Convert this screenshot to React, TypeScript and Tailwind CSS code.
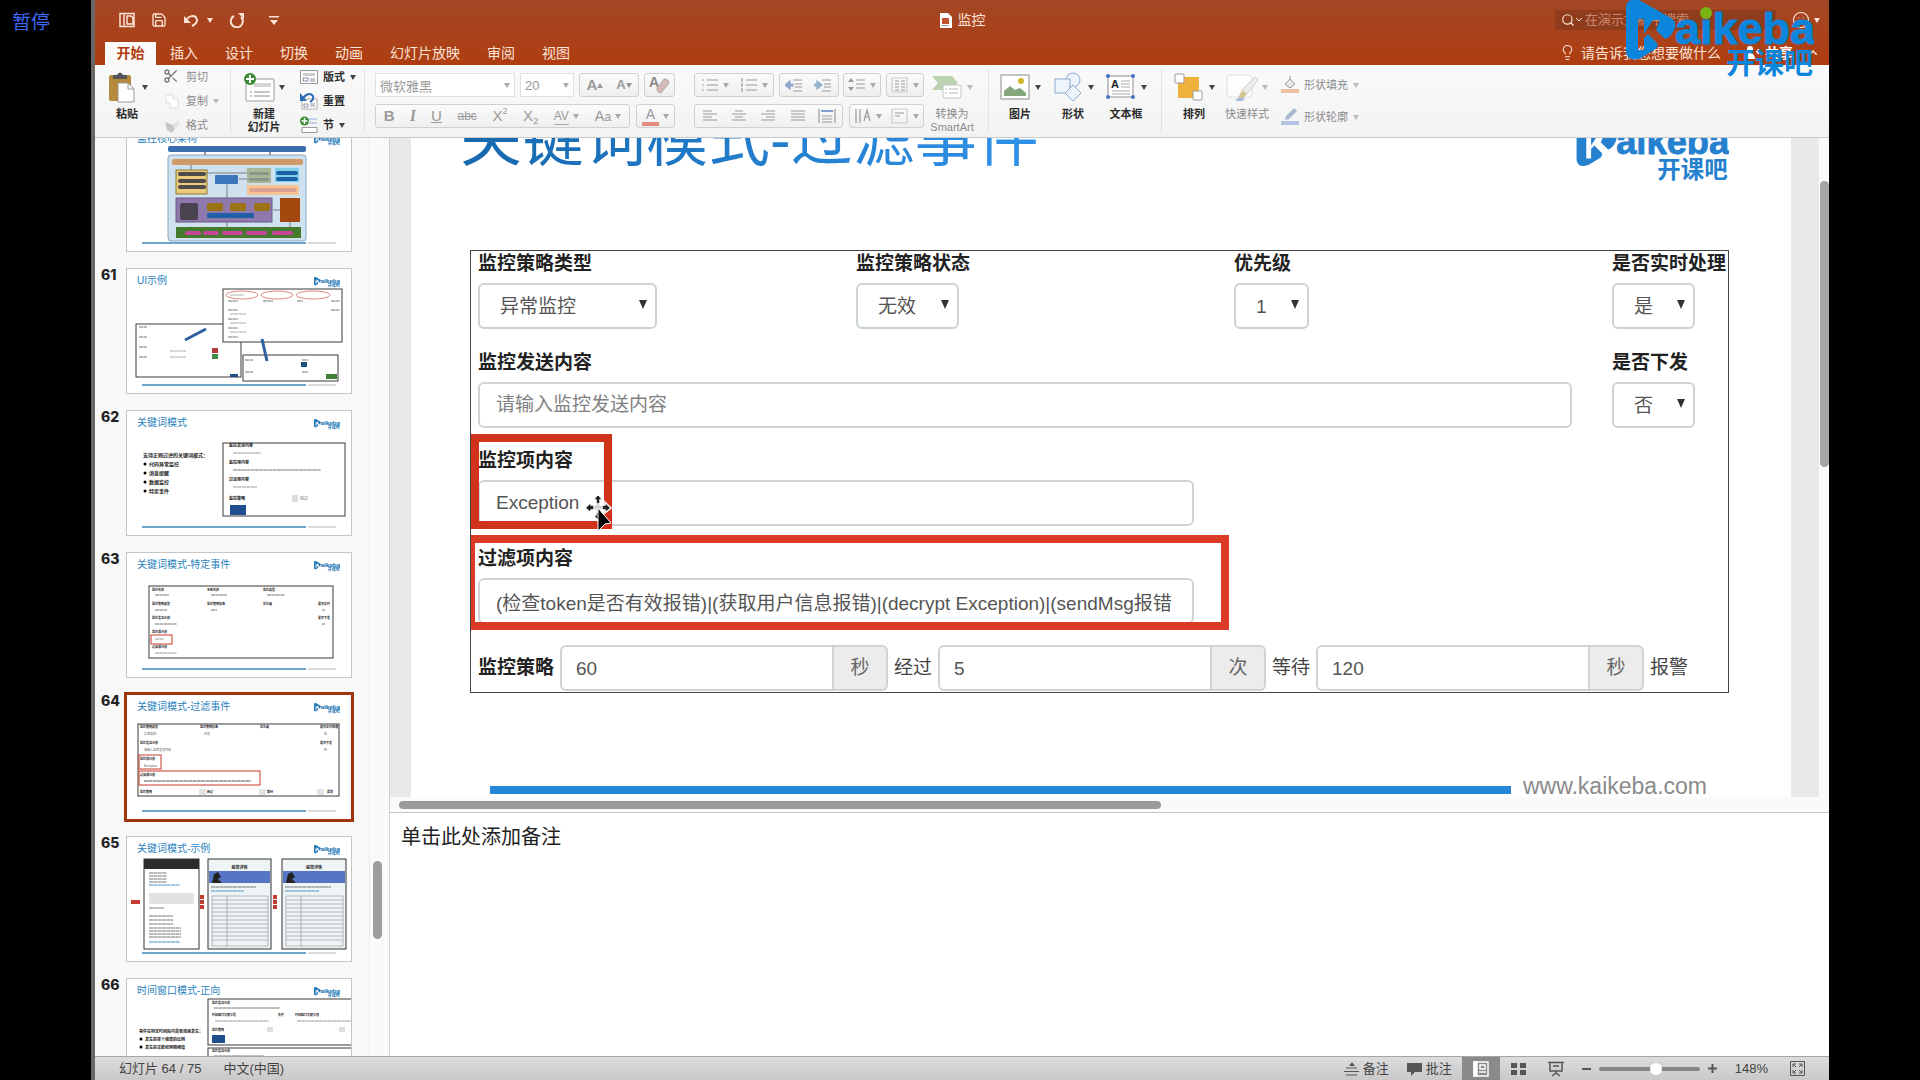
import type { ReactNode } from 'react';
import clsx from 'clsx';
import { Lightbulb, RotateCcw, Save, Scissors, Search, Smile } from 'lucide-react';

const tabs = ['插入', '设计', '切换', '动画', '幻灯片放映', '审阅', '视图'];

function Caret({ className = 'text-[#555]' }: { className?: string }) {
  return (
    <svg viewBox="0 0 6 5" className={clsx('h-[5px] w-[6px] shrink-0', className)} fill="currentColor">
      <path d="M0 0h6L3 5z" />
    </svg>
  );
}

function Logo({ color, dot, ...rest }: { color: string; dot?: string; [key: string]: any }) {
  return (
    <svg viewBox="0 0 188 78" {...rest}>
      <path
        fill={color}
        d="M0 8Q0-1 9 0h4l32 18q7 5 3 12-3 7-9 9l-9-9 4-10h-7l-9 14V19h-6v31h6V38l4-4 9 9q2 4-3 7L15 58Q2 63 0 52z"
      />
      <text
        x="49"
        y="44"
        fontFamily="'Liberation Sans', sans-serif"
        fontWeight="700"
        fontSize="45"
        fill={color}
        stroke={color}
        strokeWidth="1"
      >
        aikeba
      </text>
      {dot && <circle cx="80" cy="13" r="6" fill={dot} />}
      <text
        x="100"
        y="74"
        fontFamily="'Noto Sans CJK SC', sans-serif"
        fontWeight="700"
        fontSize="29"
        fill={color}
      >
        开课吧
      </text>
    </svg>
  );
}

/* ---------- title bar ---------- */

function TitleBar() {
  return (
    <header className="bg-gradient-to-b from-[#a34724] to-[#af3d10] text-[#fbe3d6]">
      <div className="grid h-10 grid-cols-3 items-center">
        <div className="flex items-center pl-6">
          <button aria-label="文件" className="mr-4">
            <svg viewBox="0 0 16 16" className="h-4 w-4" fill="none" stroke="currentColor" strokeWidth="1.5">
              <path d="M1 1.500h14v13H1zM5 2v12M8 4h4l2 2v6H8z" />
            </svg>
          </button>
          <button aria-label="保存" className="mr-4">
            <Save size={16} />
          </button>
          <button aria-label="撤销" className="mr-6 flex items-center gap-2">
            <svg viewBox="0 0 16 14" className="h-[14px] w-4" fill="none" stroke="currentColor" strokeWidth="2">
              <path d="M2 9C5 2 13 1 14 7c0 3-3 5-5 6" />
              <path d="M1 3v7h7z" fill="currentColor" stroke="none" />
            </svg>
            <Caret className="text-[#fbe3d6]" />
          </button>
          <button aria-label="重复" className="mr-4 -ml-2">
            <svg viewBox="0 0 16 16" className="h-4 w-4" fill="none" stroke="currentColor" strokeWidth="2">
              <path d="M5 4a6 6 0 1 0 7 1" />
              <path d="M9 1h6v6z" fill="currentColor" stroke="none" />
            </svg>
          </button>
          <button aria-label="自定义工具栏" className="ml-2">
            <svg viewBox="0 0 10 9" className="h-[9px] w-[10px]" fill="currentColor">
              <path d="M0 0h10v1.500H0zM1 4h8L5 9z" />
            </svg>
          </button>
        </div>
        <h1 className="flex items-center justify-center gap-[6px] text-sm">
          <svg viewBox="0 0 13 15" className="h-[15px] w-[13px]">
            <path d="M1 0h8l4 4v11H1z" fill="#fff" />
            <path d="M3 5h7v6H3z" fill="#c0532c" />
            <path d="M3 12h7v1H3z" fill="#999" />
          </svg>
          监控
        </h1>
        <div className="flex items-center justify-end gap-6 pr-[9px]">
          <label className="flex h-5 w-[221px] items-center bg-[#8f3c1c] pl-[6px]">
            <Search size={14} />
            <span className="sr-only">搜索</span>
            <svg viewBox="0 0 6 4" className="ml-px h-1 w-[6px]" fill="none" stroke="currentColor">
              <path d="M0 0l3 3 3-3" />
            </svg>
            <input
              className="ml-[3px] h-5 w-44 bg-transparent text-[13px] leading-5 outline-none placeholder:text-[#c88a70]"
              placeholder="在演示文稿中搜索"
            />
          </label>
          <button aria-label="反馈" className="-ml-2 flex items-center gap-1">
            <Smile size={18} strokeWidth={1.5} />
            <Caret className="text-[#fbe3d6]" />
          </button>
        </div>
      </div>
      <nav className="flex h-[25px] items-end pl-[10px] text-sm">
        <button className="h-[23px] w-[51px] bg-[#fbfaf9] pb-[2px] font-bold text-[#b23a10]">开始</button>
        <div className="flex flex-1 gap-[27px] pl-[14px]">
          {tabs.map(t => (
            <button key={t} className="h-[23px] pb-[2px]">
              {t}
            </button>
          ))}
        </div>
        <div className="flex h-[23px] items-center pr-3 pb-[2px]">
          <Lightbulb size={17} strokeWidth={1.5} />
          <button className="ml-[5px]">请告诉我您想要做什么</button>
          <button className="ml-6 flex items-center gap-1 font-bold text-white">
            <svg viewBox="0 0 16 13" className="h-[13px] w-4" fill="currentColor">
              <circle cx="5" cy="3" r="3" />
              <path d="M0 13c0-8 10-8 10 0zM11 5h5v1.500h-5zM12.500 3H14v5h-1.500z" />
            </svg>
            共享
          </button>
          <svg viewBox="0 0 8 5" className="ml-4 h-[5px] w-2" fill="none" stroke="currentColor" strokeWidth="1.5">
            <path d="M0 5l4-4 4 4" />
          </svg>
        </div>
      </nav>
    </header>
  );
}

/* ---------- ribbon ---------- */

function BigButton({
  icon,
  label,
  sub,
  muted,
}: {
  icon: ReactNode;
  label: string;
  sub?: string;
  muted?: boolean;
}) {
  return (
    <button
      className={clsx(
        'flex w-11 flex-col items-center text-[11px] leading-[13px] whitespace-nowrap',
        muted ? 'text-[#8b8b8b]' : 'font-bold text-[#2a2a2a]',
      )}
    >
      <span className="mt-[6px] mb-[5px] flex h-8 items-center gap-1">
        <svg viewBox="0 0 32 32" className="h-8 w-8">
          {icon}
        </svg>
        <Caret className={muted ? 'text-[#bbb]' : 'text-[#444]'} />
      </span>
      <span>{label}</span>
      {sub && <span>{sub}</span>}
    </button>
  );
}

function SmallButton({
  icon,
  label,
  caret,
  muted,
}: {
  icon: ReactNode;
  label: string;
  caret?: boolean;
  muted?: boolean;
}) {
  return (
    <button
      className={clsx(
        'flex h-6 items-center gap-[5px] text-[11px] whitespace-nowrap',
        muted ? 'text-[#8b8b8b]' : 'font-bold text-[#2a2a2a]',
      )}
    >
      <svg viewBox="0 0 18 18" className="h-[18px] w-[18px]">
        {icon}
      </svg>
      {label}
      {caret && <Caret className={muted ? 'text-[#bbb]' : 'text-[#444]'} />}
    </button>
  );
}

function Tools({ className, children }: { className?: string; children: ReactNode }) {
  return (
    <div
      className={clsx(
        'flex h-6 items-center justify-around rounded-[3px] border border-[#d0d0d0] bg-gradient-to-b from-[#fbfbfb] to-[#efefef] text-[#999]',
        className,
      )}
    >
      {children}
    </div>
  );
}

function Tool({ name, caret, children }: { name: string; caret?: boolean; children: ReactNode }) {
  return (
    <button aria-label={name} className="flex h-full items-center gap-1 text-[15px] leading-5">
      {children}
      {caret && <Caret className="text-[#aaa]" />}
    </button>
  );
}

function Glyph({ d, children }: { d: string; children?: ReactNode }) {
  return (
    <svg viewBox="0 0 18 18" className="h-[18px] w-[18px]" fill="none" stroke="#999" strokeWidth="1.2">
      <path d={d} />
      {children}
    </svg>
  );
}

function Divider() {
  return <div className="my-1 w-px bg-[#e2e2e2]" />;
}

function Ribbon() {
  return (
    <div className="flex h-[73px] border-b border-[#c9c9c9] bg-gradient-to-b from-[#fafafa] to-[#f3f3f3]">
      <div className="flex w-[135px] gap-[14px] pl-[10px]">
        <BigButton
          label="粘贴"
          icon={
            <>
              <rect x="3" y="4" width="22" height="26" rx="2" fill="#b58a3c" />
              <path d="M7 8V4h4q3-5 6 0h4v4z" fill="#555" />
              <path d="M12 12h10l6 6v13H12z" fill="#fff" stroke="#999" />
              <path d="M22 12v6h6" fill="none" stroke="#999" />
            </>
          }
        />
        <div className="flex flex-col">
          <SmallButton muted label="剪切" icon={<Scissors size={16} color="#777" />} />
          <SmallButton muted caret label="复制" icon={<path d="M3 3h7v4h5v9H7v-5H3z" fill="#fff" stroke="#ddd" />} />
          <SmallButton
            muted
            label="格式"
            icon={
              <>
                <path d="M2 6l8 3 2 4-3 4-5-3z" fill="#c6c6c6" />
                <path d="M10 9l5-5 2 3-4 5z" fill="#e2e2e2" />
              </>
            }
          />
        </div>
      </div>
      <Divider />
      <div className="flex w-[133px] gap-[14px] pl-[11px]">
        <BigButton
          label="新建"
          sub="幻灯片"
          icon={
            <>
              <rect x="3" y="8" width="28" height="22" rx="1" fill="#fff" stroke="#9a9a9a" />
              <path d="M11 12h17v4H11z" fill="#d5d5d5" />
              <path d="M11 21h16M11 25h16" stroke="#888" />
              <path d="M7 21h2M7 25h2" stroke="#888" />
              <circle cx="7" cy="8" r="6" fill="#3d8b34" />
              <path d="M7 4v8M3 8h8" stroke="#fff" strokeWidth="2" />
            </>
          }
        />
        <div className="flex flex-col">
          <SmallButton
            caret
            label="版式"
            icon={
              <>
                <rect x="0.500" y="2.500" width="17" height="13" fill="#fff" stroke="#999" />
                <path d="M3 5h12v3H3z" fill="#ccc" />
                <path d="M3 10h5v3H3zM10 11h5M10 13h5" fill="none" stroke="#7f8aa5" />
              </>
            }
          />
          <SmallButton
            label="重置"
            icon={
              <>
                <path d="M2 7h15v10H2z" fill="#fff" stroke="#aaa" />
                <path d="M4 12h4v3H4zM10 12h5M10 14h5" fill="none" stroke="#8a94aa" />
                <path d="M3 6Q9-1 13 4q1 4-3 6" fill="none" stroke="#2a6cb5" strokeWidth="2" />
                <path d="M0 1v8h7z" fill="#2a6cb5" />
              </>
            }
          />
          <SmallButton
            caret
            label="节"
            icon={
              <>
                <path d="M9 3h8M9 7h8" stroke="#8bb0da" />
                <path d="M2 11.500h15v5H2z" fill="#fff" stroke="#999" />
                <circle cx="4.500" cy="5" r="4.500" fill="#3d8b34" />
                <path d="M4.500 2v6M1.500 5h6" stroke="#fff" strokeWidth="1.5" />
              </>
            }
          />
        </div>
      </div>
      <Divider />

      <div className="flex w-[329px] flex-col gap-[7px] pt-2 pl-[10px]">
        <div className="flex gap-[5px]">
          <label className="flex h-6 w-[140px] items-center border border-[#e0e0e0] bg-white pr-1">
            <span className="sr-only">字体</span>
            <input
              className="h-full w-full bg-transparent pl-1 text-[13px] leading-5 text-[#999] outline-none"
              defaultValue="微软雅黑"
            />
            <Caret className="text-[#aaa]" />
          </label>
          <label className="flex h-6 w-[54px] items-center border border-[#e0e0e0] bg-white pr-1">
            <span className="sr-only">字号</span>
            <input
              className="h-full w-full bg-transparent pl-1 text-[13px] leading-5 text-[#999] outline-none"
              defaultValue="20"
            />
            <Caret className="text-[#aaa]" />
          </label>
          <Tools className="w-[60px]">
            <Tool name="增大字号">
              <span className="font-bold">A</span>
              <Caret className="-ml-1 rotate-180 text-[#999]" />
            </Tool>
            <Tool name="减小字号">
              <span className="text-[13px] font-bold">A</span>
              <Caret className="-ml-1 text-[#999]" />
            </Tool>
          </Tools>
          <Tools className="w-[31px]">
            <Tool name="清除格式">
              <svg viewBox="0 0 24 22" className="h-[22px] w-6">
                <text x="1" y="13" fontSize="14" fontWeight="700" fill="#888" fontFamily="'Liberation Sans'">
                  A
                </text>
                <path d="M9 14l7-9q5 0 5 4l-8 10q-4 0-4-5z" fill="#d8b9b9" stroke="#aaa" />
              </svg>
            </Tool>
          </Tools>
        </div>
        <div className="flex gap-[6px]">
          <Tools className="w-[255px]">
            <Tool name="加粗"><b>B</b></Tool>
            <Tool name="倾斜"><i className="font-serif font-bold">I</i></Tool>
            <Tool name="下划线"><u>U</u></Tool>
            <Tool name="删除线"><s className="text-xs">abc</s></Tool>
            <Tool name="上标">
              <span className="flex items-start">X<span className="text-[9px] leading-[10px]">2</span></span>
            </Tool>
            <Tool name="下标">
              <span className="flex items-end">X<span className="text-[9px] leading-[10px]">2</span></span>
            </Tool>
            <Tool name="字符间距" caret>
              <span className="border-b border-[#aaa] text-xs leading-4">AV</span>
            </Tool>
            <Tool name="更改大小写" caret>
              <span className="flex items-baseline">A<span className="text-xs">a</span></span>
            </Tool>
          </Tools>
          <Tools className="w-[39px]">
            <Tool name="字体颜色" caret>
              <span className="h-5 border-b-4 border-[#e08a80] px-1 text-sm leading-4">A</span>
            </Tool>
          </Tools>
        </div>
      </div>

      <div className="flex w-[230px] flex-col gap-[7px] pt-2">
        <div className="flex justify-between">
          <Tools className="w-[80px]">
            <Tool name="项目符号" caret>
              <Glyph d="M6 4h11M6 9h11M6 14h11M1 4h2M1 9h2M1 14h2" />
            </Tool>
            <Tool name="编号" caret>
              <Glyph d="M6 4h11M6 9h11M6 14h11M2 2v4M2 7v4M2 12v4" />
            </Tool>
          </Tools>
          <Tools className="w-[60px]">
            <Tool name="减少缩进">
              <Glyph d="M8 4h9M10 8h7M10 11h7M8 15h9">
                <path d="M0 9l5-4v3h3v2H5v3z" fill="#8fa3cf" stroke="#8fa3cf" />
              </Glyph>
            </Tool>
            <Tool name="增加缩进">
              <Glyph d="M8 4h9M10 8h7M10 11h7M8 15h9">
                <path d="M8 9L3 5v3H0v2h3v3z" fill="#8fb3cf" stroke="#8fb3cf" />
              </Glyph>
            </Tool>
          </Tools>
          <Tools className="w-[38px]">
            <Tool name="行距" caret>
              <Glyph d="M8 4h9M8 8h9M8 12h9">
                <path d="M0 6l3-4 3 4zM0 11l3 4 3-4z" fill="#999" stroke="none" />
              </Glyph>
            </Tool>
          </Tools>
          <Tools className="w-[38px]">
            <Tool name="分栏" caret>
              <Glyph d="M4 5h4M4 8h4M4 11h4M4 14h4M10 5h4M10 8h4M10 11h4M10 14h4">
                <path d="M1 2h15v14H1z" stroke="#ccc" />
              </Glyph>
            </Tool>
          </Tools>
        </div>
        <div className="flex justify-between">
          <Tools className="w-[149px]">
            <Tool name="左对齐"><Glyph d="M2 4h9M2 7h14M2 10h9M2 13h14" /></Tool>
            <Tool name="居中"><Glyph d="M5 4h8M2 7h14M5 10h8M2 13h14" /></Tool>
            <Tool name="右对齐"><Glyph d="M7 4h9M2 7h14M7 10h9M2 13h14" /></Tool>
            <Tool name="两端对齐"><Glyph d="M2 4h14M2 7h14M2 10h14M2 13h14" /></Tool>
            <Tool name="分散对齐">
              <Glyph d="M1 2v14M17 2v14M4 9h10M4 12h10M4 15h10">
                <path d="M3 4h12" stroke="#7fa0cf" strokeWidth="2" />
              </Glyph>
            </Tool>
          </Tools>
          <Tools className="w-[75px]">
            <Tool name="文字方向" caret>
              <Glyph d="M2 2v14M6 2v14M10 14l3-11 3 11M11 10h4" />
            </Tool>
            <Tool name="对齐文本" caret>
              <Glyph d="M4 6h9M4 9h5">
                <path d="M1 2h15v14H1z" stroke="#ccc" />
              </Glyph>
            </Tool>
          </Tools>
        </div>
      </div>

      <div className="w-16 pl-[6px]">
        <BigButton
          muted
          label="转换为"
          sub="SmartArt"
          icon={
            <>
              <path d="M1 5h20l6 7-6 7H1l6-7z" fill="#bcd3b2" />
              <rect x="12" y="14" width="18" height="13" rx="2" fill="#fff" stroke="#c5c5c5" />
              <path d="M18 18h9M18 22h9M14 18h2M14 22h2" stroke="#bbb" />
            </>
          }
        />
      </div>
      <Divider />
      <div className="flex w-[172px] gap-[9px] pl-[9px]">
        <BigButton
          label="图片"
          icon={
            <>
              <rect x="2" y="4" width="28" height="24" fill="#fff" stroke="#8c8c8c" />
              <path d="M5 25v-5l6-5 5 4 5-2 6 5v3z" fill="#83a67a" />
              <circle cx="22" cy="10" r="3" fill="#d0b62c" />
            </>
          }
        />
        <BigButton
          label="形状"
          icon={
            <g fill="#eef4fc" stroke="#8fa9d0">
              <circle cx="21" cy="9" r="7" />
              <rect x="3" y="8" width="15" height="14" />
              <path d="M21 14l8 8-8 8-8-8z" />
            </g>
          }
        />
        <BigButton
          label="文本框"
          icon={
            <>
              <rect x="3" y="5" width="25" height="21" fill="#fff" stroke="#8c8c8c" />
              <text x="6" y="17" fontSize="11" fontWeight="700" fontFamily="'Liberation Sans'" fill="#222">
                A
              </text>
              <path d="M16 10h9M16 13h9M16 16h9M7 20h18M7 23h18" stroke="#aaa" />
              <g fill="#4573c4">
                <circle cx="3" cy="5" r="2" />
                <circle cx="28" cy="5" r="2" />
                <circle cx="3" cy="26" r="2" />
                <circle cx="28" cy="26" r="2" />
              </g>
            </>
          }
        />
      </div>
      <Divider />
      <div className="flex gap-[9px] pl-[10px]">
        <BigButton
          label="排列"
          icon={
            <>
              <rect x="5" y="6" width="21" height="21" fill="#f0b13c" />
              <rect x="2" y="3" width="9" height="9" rx="1" fill="#fff" stroke="#999" />
              <rect x="20" y="20" width="9" height="9" rx="1" fill="#fff" stroke="#999" />
            </>
          }
        />
        <BigButton
          muted
          label="快速样式"
          icon={
            <>
              <rect x="1" y="4" width="25" height="22" rx="3" fill="#fdfdfd" stroke="#e0e0e0" />
              <path d="M29 6l3 3-11 14-5-4z" fill="#ececec" stroke="#ccc" />
              <path d="M16 19l5 4-4 5-5-1z" fill="#d4c793" />
              <path d="M9 29q5-4 10-1-4 4-10 1z" fill="#a9b9e0" />
            </>
          }
        />
        <div className="flex flex-col gap-2 pt-2 pl-[3px]">
          <SmallButton
            muted
            caret
            label="形状填充"
            icon={
              <>
                <path d="M4 8l5-5 5 5-5 4zM9 3V0" fill="#e9e9e9" stroke="#999" />
                <path d="M0 13h18v4H0z" fill="#edbfa6" />
              </>
            }
          />
          <SmallButton
            muted
            caret
            label="形状轮廓"
            icon={
              <>
                <path d="M4 12l1-4 8-8 3 3-8 8z" fill="#a9b7cf" />
                <path d="M0 13h18v4H0z" fill="#b6c4e4" />
              </>
            }
          />
        </div>
      </div>
    </div>
  );
}

/* ---------- slide thumbnails, drawn on a 224 x 126 canvas ---------- */

function Rules({ x, y, w, rows, step, color = '#777' }: { x: number; y: number; w: number; rows: number; step: number; color?: string }) {
  return (
    <>
      {Array.from({ length: rows }, (_, i) => (
        <path key={i} d={`M${x} ${y + i * step}h${w}`} stroke={color} strokeDasharray="4 0.4" />
      ))}
    </>
  );
}

function Frame({ x, y, w, h }: { x: number; y: number; w: number; h: number }) {
  return <rect x={x} y={y} width={w} height={h} fill="#fff" stroke="#3a3a3a" />;
}

function TinyText({ x, y, children, bold = true, size = 4 }: { x: number; y: number; children: string; bold?: boolean; size?: number }) {
  return (
    <text x={x} y={y} fontSize={size} fontWeight={bold ? 700 : 400} fill={bold ? '#222' : '#666'}>
      {children}
    </text>
  );
}

const art60 = (
  <>
    <rect x="41" y="20" width="138" height="6" rx="2" fill="#3d6fae" />
    <path d="M78 26v7M143 26v7" stroke="#333" />
    <rect x="41" y="29" width="138" height="86" rx="3" fill="#cfe0ef" stroke="#8aa6c0" />
    <rect x="45" y="33" width="131" height="6" rx="2" fill="#d09a68" />
    <rect x="49" y="44" width="31" height="24" fill="#eacb7c" stroke="#8d7838" />
    <g fill="#4d4a4a">
      <rect x="51" y="46" width="28" height="4" rx="2" />
      <rect x="51" y="53" width="28" height="4" rx="2" />
      <rect x="51" y="59" width="28" height="4" rx="2" />
    </g>
    <rect x="88" y="49" width="23" height="9" rx="1" fill="#3d76bd" />
    <path d="M100 58v14M64 39v5M80 47h40M112 53h8M146 84h7M100 96v5M163 96v5" stroke="#555" strokeWidth="0.7" />
    <rect x="120" y="42" width="24" height="15" fill="#a8b795" />
    <rect x="122" y="46" width="20" height="3" rx="1" fill="#8c9489" />
    <rect x="122" y="52" width="20" height="3" rx="1" fill="#8c9489" />
    <rect x="148" y="42" width="24" height="14" fill="#7fd0e8" />
    <rect x="149" y="45" width="22" height="4" rx="2" fill="#1d5fa5" />
    <rect x="149" y="51" width="22" height="4" rx="2" fill="#1d5fa5" />
    <rect x="120" y="59" width="52" height="10" fill="#f4c593" />
    <rect x="122" y="62" width="48" height="4" rx="2" fill="#dba38f" />
    <rect x="49" y="72" width="96" height="24" fill="#8f78ab" stroke="#6b5a86" />
    <rect x="53" y="77" width="18" height="17" rx="2" fill="#4a4350" />
    <g fill="#9b7312">
      <rect x="80" y="77" width="16" height="8" rx="2" />
      <rect x="103" y="77" width="16" height="8" rx="2" />
      <rect x="127" y="77" width="16" height="8" rx="2" />
    </g>
    <rect x="80" y="87" width="47" height="5" rx="1" fill="#215fa6" />
    <rect x="153" y="72" width="20" height="24" fill="#a5480f" />
    <rect x="49" y="101" width="125" height="11" fill="#457a2c" />
    <g fill="#c4459a">
      <rect x="58" y="105" width="16" height="4" rx="2" />
      <rect x="76" y="105" width="16" height="4" rx="2" />
      <rect x="95" y="105" width="21" height="4" rx="2" />
      <rect x="119" y="105" width="21" height="4" rx="2" />
      <rect x="145" y="105" width="21" height="4" rx="2" />
    </g>
  </>
);

const art61 = (
  <>
    <Frame x={9} y={56} w={105} h={53} />
    <Frame x={96} y={21} w={119} h={53} />
    <Frame x={116} y={87} w={95} h={26} />
    <g fill="none" stroke="#d66a60" strokeWidth="0.8">
      <ellipse cx="115" cy="27" rx="16" ry="4" />
      <ellipse cx="150" cy="27" rx="16" ry="4" />
      <ellipse cx="186" cy="27" rx="17" ry="4" />
    </g>
    <Rules x={101} y={33} w={10} rows={5} step={9} />
    <Rules x={103} y={27} w={14} rows={1} step={9} color="#aaa" />
    <Rules x={136} y={33} w={10} rows={1} step={9} />
    <Rules x={170} y={33} w={6} rows={1} step={9} />
    <Rules x={204} y={33} w={9} rows={2} step={9} />
    <Rules x={103} y={46} w={16} rows={3} step={9} color="#aaa" />
    <Rules x={12} y={59} w={8} rows={4} step={10} />
    <Rules x={43} y={83} w={16} rows={2} step={6} color="#aaa" />
    <Rules x={118} y={92} w={8} rows={2} step={12} />
    <Rules x={175} y={92} w={6} rows={2} step={12} />
    <path d="M58 72l21-11M135 71l5 22" stroke="#2f5f9e" strokeWidth="3" />
    <rect x="85" y="80" width="6" height="5" fill="#b33a36" />
    <rect x="85" y="86" width="6" height="5" fill="#3f8a48" />
    <rect x="103" y="106" width="8" height="3" fill="#1f4f80" />
    <rect x="174" y="94" width="6" height="5" fill="#1f4f80" />
    <rect x="199" y="106" width="11" height="5" fill="#3f7f38" />
  </>
);

const art62 = (
  <>
    <TinyText x={16} y={47} size={5}>支持正则过滤的关键词模式：</TinyText>
    {['代码异常监控', '消息提醒', '数据监控', '特定事件'].map((t, i) => (
      <g key={t}>
        <circle cx="18" cy={54 + i * 9} r="1.5" />
        <TinyText x={22} y={56 + i * 9} size={5}>{t}</TinyText>
      </g>
    ))}
    <Frame x={96} y={33} w={122} h={73} />
    <TinyText x={102} y={37}>监控发送内容</TinyText>
    <Rules x={106} y={43} w={28} rows={1} step={1} color="#999" />
    <TinyText x={102} y={54}>监控项内容</TinyText>
    <Rules x={106} y={60} w={88} rows={1} step={1} />
    <TinyText x={102} y={71}>过滤项内容</TinyText>
    <Rules x={106} y={77} w={24} rows={1} step={1} color="#999" />
    <TinyText x={102} y={90}>监控策略</TinyText>
    <rect x="165" y="85" width="6" height="7" fill="#ddd" />
    <TinyText x={173} y={90} bold={false}>经过</TinyText>
    <rect x="103" y="95" width="16" height="10" fill="#1f4f8f" />
  </>
);

const art63 = (
  <>
    <Frame x={22} y={34} w={184} h={72} />
    <TinyText x={25} y={39} size={3}>监控名称</TinyText>
    <TinyText x={80} y={39} size={3}>系统名称</TinyText>
    <TinyText x={136} y={39} size={3}>监控类型</TinyText>
    <Rules x={28} y={43} w={14} rows={1} step={1} />
    <Rules x={84} y={43} w={16} rows={1} step={1} />
    <Rules x={140} y={43} w={18} rows={1} step={1} />
    <TinyText x={25} y={53} size={3}>监控策略类型</TinyText>
    <TinyText x={80} y={53} size={3}>监控策略状态</TinyText>
    <TinyText x={136} y={53} size={3}>优先级</TinyText>
    <TinyText x={191} y={53} size={3}>是否实时</TinyText>
    <Rules x={28} y={58} w={12} rows={1} step={1} />
    <Rules x={84} y={58} w={6} rows={1} step={1} />
    <Rules x={195} y={58} w={3} rows={1} step={1} />
    <TinyText x={25} y={67} size={3}>监控发送内容</TinyText>
    <TinyText x={191} y={67} size={3}>是否下发</TinyText>
    <Rules x={28} y={72} w={22} rows={1} step={1} />
    <Rules x={195} y={72} w={3} rows={1} step={1} />
    <TinyText x={25} y={81} size={3}>监控项内容</TinyText>
    <rect x="24" y="83" width="21" height="9" fill="#fff" stroke="#c93a2c" />
    <Rules x={28} y={87} w={9} rows={1} step={1} color="#999" />
    <TinyText x={25} y={96} size={3}>过滤项内容</TinyText>
    <Rules x={28} y={101} w={22} rows={1} step={1} color="#999" />
  </>
);

const art64 = (
  <>
    <Frame x={11} y={30} w={201} h={72} />
    <TinyText x={13} y={34} size={3}>监控策略类型</TinyText>
    <TinyText x={73} y={34} size={3}>监控策略状态</TinyText>
    <TinyText x={133} y={34} size={3}>优先级</TinyText>
    <TinyText x={193} y={34} size={3}>是否实时处理</TinyText>
    <TinyText x={17} y={41} size={3} bold={false}>异常监控</TinyText>
    <TinyText x={77} y={41} size={3} bold={false}>无效</TinyText>
    <TinyText x={197} y={41} size={3} bold={false}>是</TinyText>
    <TinyText x={13} y={50} size={3}>监控发送内容</TinyText>
    <TinyText x={193} y={50} size={3}>是否下发</TinyText>
    <TinyText x={17} y={57} size={3} bold={false}>请输入监控发送内容</TinyText>
    <TinyText x={197} y={57} size={3} bold={false}>否</TinyText>
    <TinyText x={13} y={66} size={3}>监控项内容</TinyText>
    <TinyText x={17} y={73} size={3} bold={false}>Exception</TinyText>
    <TinyText x={13} y={82} size={3}>过滤项内容</TinyText>
    <Rules x={17} y={87} w={107} rows={1} step={1} color="#555" />
    <rect x="12" y="61" width="22" height="14" fill="none" stroke="#c93a2c" />
    <rect x="12" y="77" width="121" height="14" fill="none" stroke="#c93a2c" />
    <TinyText x={13} y={99} size={3}>监控策略</TinyText>
    <g fill="#e3e3e3">
      <rect x="72" y="95" width="7" height="6" />
      <rect x="132" y="95" width="7" height="6" />
      <rect x="190" y="95" width="7" height="6" />
    </g>
    <TinyText x={80} y={99} size={3}>经过</TinyText>
    <TinyText x={140} y={99} size={3}>等待</TinyText>
    <TinyText x={200} y={99} size={3}>报警</TinyText>
  </>
);

function Phone({ x, w }: { x: number; w: number }) {
  return (
    <>
      <rect x={x} y="23" width={w} height="90" fill="#eef4f5" stroke="#333" />
      <TinyText x={x + w / 2 - 8} y={33}>报警详情</TinyText>
      <rect x={x + 1} y="35" width={w - 2} height="12" fill="#5576c4" />
      <path d={`M${x + 4} 47l2-9 4-2 3 5-3 2 4 4z`} fill="#222" />
      <Rules x={x + 3} y={51} w={w - 18} rows={1} step={5} />
      <Rules x={x + 3} y={55} w={w - 30} rows={1} step={5} color="#4a8fc0" />
      <path
        d={`M${x + 4} 60h${w - 7}v50H${x + 4}zM${x + 19} 60v50${[64, 68, 72, 76, 80, 84, 88, 92, 96, 100, 104].map(y => `M${x + 4} ${y}h${w - 7}`).join('')}`}
        fill="none"
        stroke="#8f9295"
        strokeWidth="0.6"
      />
    </>
  );
}

const art65 = (
  <>
    <rect x="17" y="23" width="55" height="90" fill="#fff" stroke="#333" />
    <path d="M17 23h55v10H17z" fill="#2c2c2c" />
    <Rules x={22} y={37} w={18} rows={4} step={3} />
    <Rules x={22} y={49} w={31} rows={1} step={3} color="#4a8fc0" />
    <rect x="22" y="57" width="45" height="11" fill="#e2e2e2" />
    <Rules x={22} y={72} w={15} rows={1} step={3} />
    <Rules x={22} y={80} w={24} rows={3} step={4} />
    <Rules x={22} y={92} w={32} rows={4} step={3} />
    <Rules x={22} y={106} w={31} rows={1} step={3} color="#4a8fc0" />
    <Phone x={81} w={63} />
    <Phone x={155} w={64} />
    <g fill="#c23a30">
      <rect x="4" y="64" width="9" height="4" />
      <rect x="73" y="59" width="4" height="4" />
      <rect x="73" y="64" width="4" height="4" />
      <rect x="73" y="69" width="4" height="4" />
      <rect x="146" y="59" width="4" height="4" />
      <rect x="146" y="64" width="4" height="4" />
      <rect x="146" y="69" width="4" height="4" />
    </g>
  </>
);

const art66 = (
  <>
    <TinyText x={12} y={55}>事件在特定时间段内是否连续发生：</TinyText>
    <circle cx="14" cy="61" r="1.5" />
    <TinyText x={18} y={63}>发生的某个维度的比例</TinyText>
    <circle cx="14" cy="69" r="1.5" />
    <TinyText x={18} y={71}>发生的次数和预期阈值</TinyText>
    <Frame x={81} y={21} w={150} h={46} />
    <TinyText x={85} y={26} size={3}>监控发送内容</TinyText>
    <Rules x={87} y={30} w={66} rows={1} step={1} />
    <TinyText x={85} y={38} size={3}>时间窗口关键字段</TinyText>
    <TinyText x={151} y={38} size={3}>条件</TinyText>
    <TinyText x={168} y={38} size={3}>时间窗口关键字值</TinyText>
    <Rules x={88} y={43} w={54} rows={1} step={1} color="#999" />
    <Rules x={170} y={43} w={54} rows={1} step={1} color="#999" />
    <TinyText x={85} y={53} size={3}>监控策略</TinyText>
    <rect x="140" y="49" width="6" height="5" fill="#ddd" />
    <rect x="212" y="49" width="6" height="5" fill="#ddd" />
    <rect x="85" y="57" width="13" height="8" fill="#1f4f8f" />
    <Frame x={81} y={70} w={150} h={46} />
    <TinyText x={85} y={74} size={3}>监控发送内容</TinyText>
    <Rules x={87} y={78} w={50} rows={1} step={1} />
  </>
);

const slides = [
  { no: '', title: '监控核心架构', art: art60 },
  { no: '61', title: 'UI示例', art: art61 },
  { no: '62', title: '关键词模式', art: art62 },
  { no: '63', title: '关键词模式-特定事件', art: art63 },
  { no: '64', title: '关键词模式-过滤事件', art: art64 },
  { no: '65', title: '关键词模式-示例', art: art65 },
  { no: '66', title: '时间窗口模式-正向', art: art66 },
];

function SlideList() {
  return (
    <aside className="flex w-[295px] shrink-0 overflow-hidden border-r border-[#cfcfcf] bg-[#f8f8f8]">
      <ul className="-mt-3 flex flex-1 flex-col gap-4 pl-[6px]">
        {slides.map(s => (
          <li key={s.title} className="flex items-start">
            <span className="w-[25px] shrink-0 font-[Inter] text-sm leading-[14px] font-extrabold text-[#222]">{s.no}</span>
            <button
              aria-label={s.title}
              className={clsx('h-[126px] w-[226px] shrink-0 bg-white outline', {
                'outline-[3px] -outline-offset-1 outline-[#a03510]': s.no === '64',
                'outline-1 -outline-offset-1 outline-[#c6c6c6]': s.no !== '64',
              })}
            >
              <svg
                viewBox="0 0 224 126"
                className="block h-full w-full"
                fontFamily="'Liberation Sans', 'Noto Sans CJK SC', sans-serif"
              >
                <text x="10" y="16" fontSize="10" fill="#2a7fbd">
                  {s.title}
                </text>
                <Logo color="#2277b5" x="187" y="9" width="26" height="11" />
                {s.art}
                <path d="M15 117h164" stroke="#3f86b8" strokeWidth="1.5" />
                <path d="M181 117h28" stroke="#999" strokeWidth="0.7" />
              </svg>
            </button>
          </li>
        ))}
      </ul>
      <div className="flex w-5 flex-col border-l border-[#ececec] bg-[#fafafa] pt-[723px]">
        <div className="ml-[3px] h-[78px] w-[9px] rounded-full bg-[#9d9d9d]" />
      </div>
    </aside>
  );
}

/* ---------- slide ---------- */

function Label({ htmlFor, children }: { htmlFor?: string; children: string }) {
  return (
    <label htmlFor={htmlFor} className="block text-[19px] leading-[26px] font-bold whitespace-nowrap text-[#222]">
      {children}
    </label>
  );
}

function SelectField({ id, label, value, className }: { id: string; label: string; value: string; className: string }) {
  return (
    <div>
      <Label htmlFor={id}>{label}</Label>
      <div className={clsx('relative mt-[6px]', className)}>
        <select
          id={id}
          className="h-[46px] w-full appearance-none rounded-md border-2 border-[#cbd3d6] bg-white pt-[2px] pl-5 text-[19px] text-[#555]"
          defaultValue={value}
        >
          <option>{value}</option>
        </select>
        <svg viewBox="0 0 8 9" className="pointer-events-none absolute top-[17px] right-[10px] h-[9px] w-2" fill="#333">
          <path d="M0 0h8L4 9z" />
        </svg>
      </div>
    </div>
  );
}

const fieldClass =
  'mt-[6px] h-[46px] w-full rounded-md border-2 border-[#d0d3d5] bg-white px-4 text-[19px] text-[#555] outline-none placeholder:text-[#808080]';

function UnitField({ label, value, unit }: { label: string; value: string; unit: string }) {
  return (
    <div className="flex h-[46px] w-[328px]">
      <input
        aria-label={label}
        defaultValue={value}
        className="w-0 flex-1 rounded-l-md border-2 border-[#d0d3d5] bg-white pt-[2px] pl-[14px] text-[19px] text-[#555] outline-none"
      />
      <span className="flex w-[54px] items-center justify-center rounded-r-md border-2 border-l-0 border-[#d0d3d5] bg-[#ececec] text-[19px] text-[#666]">
        {unit}
      </span>
    </div>
  );
}

function MoveCursor() {
  return (
    <svg viewBox="0 0 28 38" className="absolute top-[243px] left-[113px] h-[38px] w-7">
      <path
        d="M14 0l5 6h-3v5h5V8l6 6-6 5v-3h-5v5h3l-5 6-5-6h3v-5H7v3l-6-5 6-6v3h5V6H9z"
        fill="#222"
        stroke="#fff"
        strokeWidth="1.5"
      />
      <path d="M9 9h10v10H9z" fill="#fff" opacity="0.8" />
      <path d="M14 14l13 15-6 1-7 7z" fill="#000" stroke="#fff" />
    </svg>
  );
}

function Slide() {
  return (
    <section className="h-full bg-white pr-[62px] pl-[49px]">
      <div className="flex h-[112px] items-start justify-between">
        <h2 className="-mt-[42px] bg-gradient-to-r from-[#1668ad] to-[#2f92ea] bg-clip-text text-[62px] leading-[88px] whitespace-nowrap text-transparent">
          关键词模式-过滤事件
        </h2>
        <Logo color="#2580cf" className="-mt-5 h-[63px] w-[153px]" />
      </div>

      <form className="relative ml-[10px] border border-[#444] pb-px pl-[7px]">
        <div className="grid grid-cols-[3fr_3fr_3fr_116px]">
          <SelectField id="type" label="监控策略类型" value="异常监控" className="w-[179px]" />
          <SelectField id="state" label="监控策略状态" value="无效" className="w-[103px]" />
          <SelectField id="priority" label="优先级" value="1" className="w-[75px]" />
          <SelectField id="realtime" label="是否实时处理" value="是" className="w-[83px]" />
        </div>
        <div className="mt-[21px] grid grid-cols-[3fr_3fr_3fr_116px]">
          <div className="col-span-3 pr-10">
            <Label htmlFor="content">监控发送内容</Label>
            <input id="content" className={fieldClass} placeholder="请输入监控发送内容" />
          </div>
          <SelectField id="send" label="是否下发" value="否" className="w-[83px]" />
        </div>
        <div className="mt-5 w-[716px]">
          <Label htmlFor="item">监控项内容</Label>
          <input id="item" className={fieldClass} defaultValue="Exception" />
        </div>
        <div className="mt-5 w-[716px]">
          <Label htmlFor="filter">过滤项内容</Label>
          <input
            id="filter"
            className={fieldClass}
            defaultValue="(检查token是否有效报错)|(获取用户信息报错)|(decrypt Exception)|(sendMsg报错"
          />
        </div>
        <div className="mt-[21px] flex items-center gap-[6px] text-[19px] text-[#444]">
          <Label>监控策略</Label>
          <UnitField label="监控策略" value="60" unit="秒" />
          <span>经过</span>
          <UnitField label="经过" value="5" unit="次" />
          <span>等待</span>
          <UnitField label="等待" value="120" unit="秒" />
          <span>报警</span>
        </div>
        {/* highlight boxes drawn over the form */}
        <div className="absolute top-[183px] left-0 h-[95px] w-[141px] border-8 border-[#d0321c]" />
        <div className="absolute top-[284px] left-0 h-[95px] w-[758px] border-8 border-l-4 border-[#db3b26]" />
        <MoveCursor />
      </form>

      <div className="mt-20 flex items-center gap-3 pl-[30px]">
        <div className="h-2 flex-1 bg-[#2585d8]" />
        <a href="#site" className="mr-[22px] pb-2 text-[23px] leading-[26px] text-[#8a8a8a]">
          www.kaikeba.com
        </a>
      </div>
    </section>
  );
}

/* ---------- status bar ---------- */

function StatusBar() {
  return (
    <footer className="flex h-6 items-center border-t border-[#a5a5a5] bg-gradient-to-b from-[#dcdcdc] to-[#c9c9c9] text-[13px] text-[#444]">
      <span className="ml-6">幻灯片 64 / 75</span>
      <span className="ml-[22px] flex-1">中文(中国)</span>
      <button className="flex items-center gap-1">
        <svg viewBox="0 0 15 14" className="h-[14px] w-[15px]" stroke="#555" strokeWidth="1.2">
          <path d="M5 4l3-4 3 4z" fill="#555" stroke="none" />
          <path d="M2 6h11M0 9.500h15M2 13h11" />
        </svg>
        备注
      </button>
      <button className="ml-[18px] flex items-center gap-1">
        <svg viewBox="0 0 15 14" className="h-[14px] w-[15px]" fill="#555">
          <path d="M0 1h15v9H8l-4 4v-4H0z" />
        </svg>
        批注
      </button>
      <button aria-label="普通视图" className="ml-[10px] flex h-full w-[38px] items-center justify-center bg-[#8a8a8a]">
        <svg viewBox="0 0 16 16" className="h-4 w-4" fill="none" stroke="#fff" strokeWidth="1.5">
          <path d="M1 1h14v14H1z" />
          <path d="M1 1h3v14H1z" fill="#fff" />
          <path d="M7 4h5v4H7zM6 11h7" />
        </svg>
      </button>
      <button aria-label="幻灯片浏览" className="ml-[10px]">
        <svg viewBox="0 0 18 14" className="h-[14px] w-[18px]" fill="#555">
          <path d="M1 1h6v5H1zM10 1h6v5h-6zM1 8h6v5H1zM10 8h6v5h-6z" />
        </svg>
      </button>
      <button aria-label="放映" className="ml-5">
        <svg viewBox="0 0 16 16" className="h-4 w-4" fill="none" stroke="#555" strokeWidth="1.5">
          <path d="M0 1.500h16M2 2v8h12V2M5 5h6M8 10v3M4 15l4-3 4 3" />
        </svg>
      </button>
      <button aria-label="缩小" className="ml-[18px] w-[9px]">
        <span className="block h-[2px] bg-[#555]" />
      </button>
      <input
        type="range"
        aria-label="缩放"
        defaultValue={58}
        className="ml-2 h-[13px] w-[101px] appearance-none bg-transparent [&::-webkit-slider-runnable-track]:h-1 [&::-webkit-slider-runnable-track]:rounded-full [&::-webkit-slider-runnable-track]:bg-[#858585] [&::-webkit-slider-thumb]:-mt-1 [&::-webkit-slider-thumb]:h-3 [&::-webkit-slider-thumb]:w-3 [&::-webkit-slider-thumb]:appearance-none [&::-webkit-slider-thumb]:rounded-full [&::-webkit-slider-thumb]:bg-white"
      />
      <button aria-label="放大" className="ml-2">
        <svg viewBox="0 0 9 9" className="h-[9px] w-[9px]" stroke="#555" strokeWidth="2">
          <path d="M0 4.500h9M4.500 0v9" />
        </svg>
      </button>
      <span className="ml-[18px]">148%</span>
      <button aria-label="适应窗口" className="mr-6 ml-[22px]">
        <svg viewBox="0 0 15 15" className="h-[15px] w-[15px]" fill="none" stroke="#555">
          <path d="M0.500 0.500h14v14h-14zM3 6V3h3M3 3l3 3M12 6V3H9M12 3L9 6M3 9v3h3M3 12l3-3M12 9v3H9M12 12L9 9" />
        </svg>
      </button>
    </footer>
  );
}

export default function App() {
  return (
    <div className="flex h-screen overflow-hidden bg-black font-['Liberation_Sans','Noto_Sans_CJK_SC',sans-serif]">
      <div className="w-[91px] shrink-0 pt-[9px] pl-3 text-[19px] leading-7 text-[#3f66f2]">暂停</div>
      <div className="relative flex min-w-0 flex-1 flex-col border-l-4 border-[#6a6663] bg-white">
        <TitleBar />
        <Ribbon />
        <div className="flex min-h-0 flex-1">
          <SlideList />
          <main className="flex min-w-0 flex-1 flex-col">
            <div className="flex h-[659px] bg-[#e9e9ea]">
              <div className="min-w-0 flex-1 overflow-hidden pr-7 pl-[21px]">
                <Slide />
              </div>
              <div className="w-[10px] bg-[#fafafa] pt-[43px]">
                <div className="ml-px h-[286px] rounded-full bg-[#a5a5a8]" />
              </div>
            </div>
            <div className="h-4 border-b border-[#c8c8c8] bg-[#fafafa] pt-1 pl-[9px]">
              <div className="h-2 w-[762px] rounded-full bg-[#9b9b9b]" />
            </div>
            <textarea
              aria-label="备注"
              className="flex-1 resize-none bg-white px-[11px] pt-[10px] font-['Liberation_Serif','Noto_Sans_CJK_SC',serif] text-xl leading-7 text-[#222] outline-none"
              defaultValue="单击此处添加备注"
            />
          </main>
        </div>
        <StatusBar />
        {/* channel watermark */}
        <Logo color="#0c86dc" dot="#7bb314" className="pointer-events-none absolute top-0 right-[15px] h-[78px] w-[188px]" />
      </div>
      <div className="w-[91px] shrink-0" />
    </div>
  );
}
